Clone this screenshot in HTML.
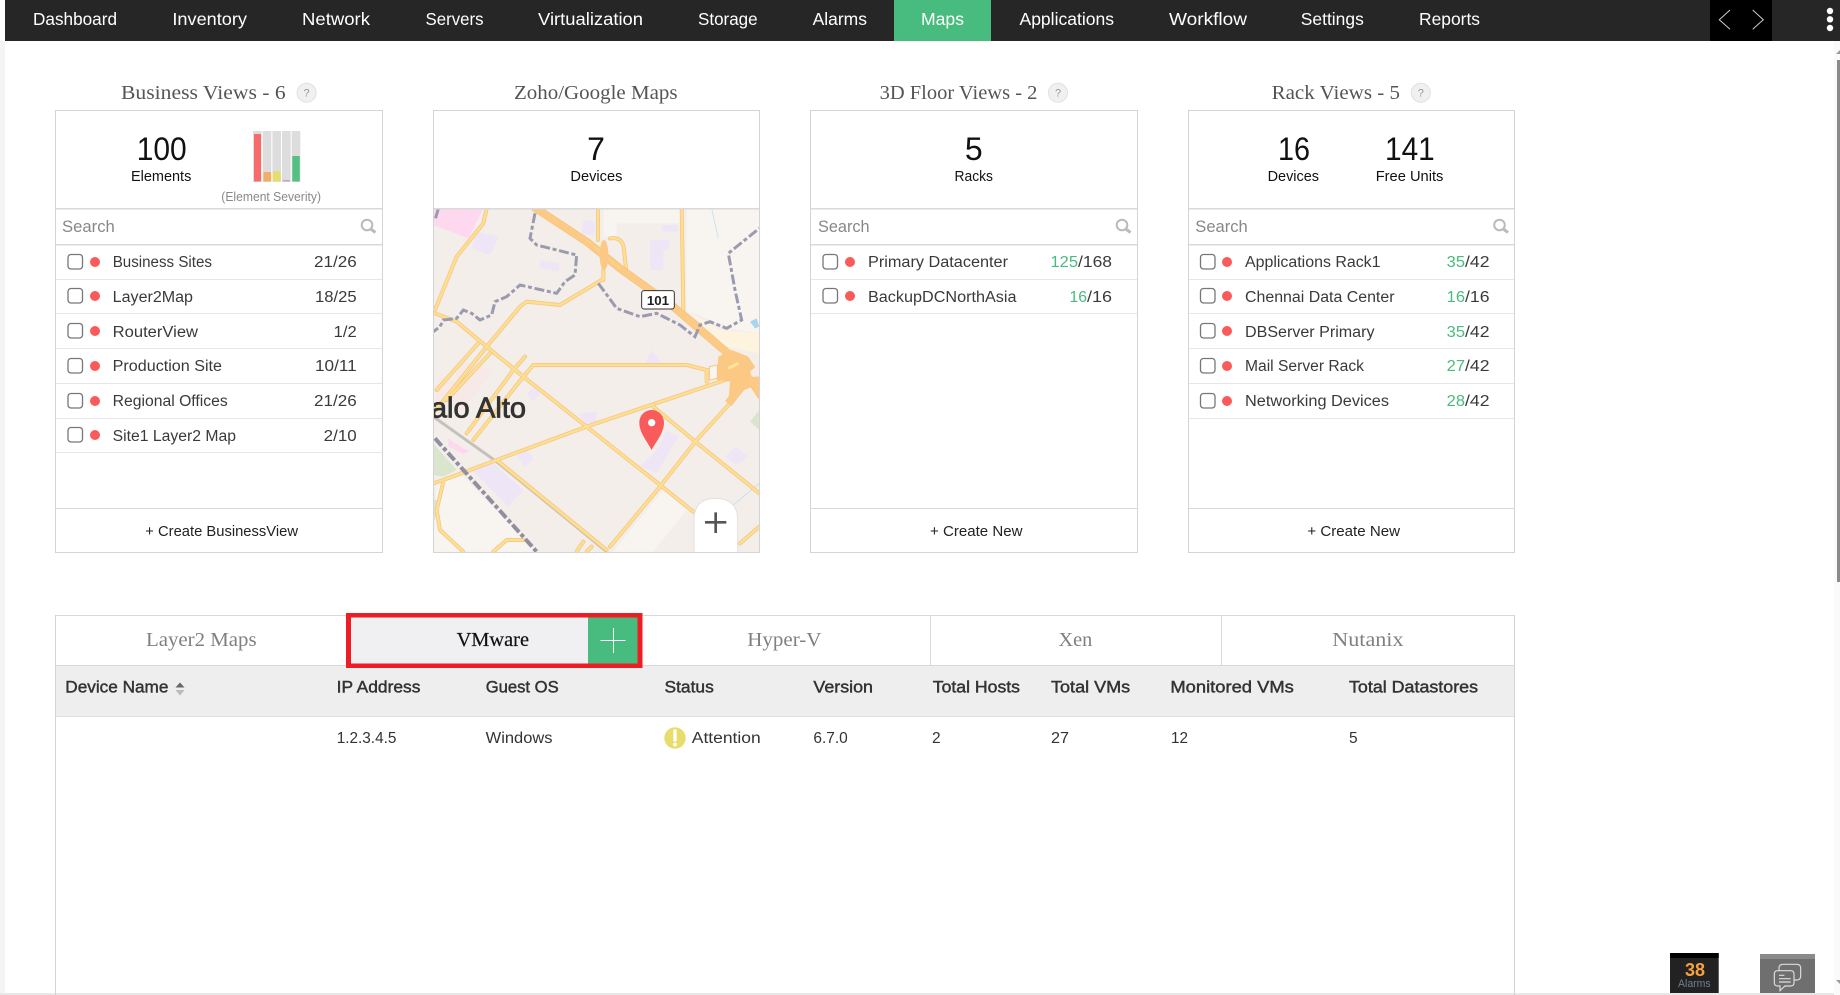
<!DOCTYPE html>
<html><head><meta charset="utf-8"><title>Maps</title>
<style>
html,body{margin:0;padding:0;background:#fff;width:1840px;height:995px;overflow:hidden}
svg{display:block}
text{font-family:"Liberation Sans",sans-serif;fill:#333}
.n{font-size:17.5px;fill:#fff}
.t{font-family:"Liberation Serif",serif;font-size:20px;fill:#555}
.tab{font-family:"Liberation Serif",serif;font-size:20px;fill:#808080}
.b{font-size:32px;fill:#111}
.l{font-size:15px;fill:#111}
.s{font-size:16.5px;fill:#888}
.r{font-size:15.5px;fill:#3a3a3a}
.g{font-size:15.5px;fill:#48bb7e}
.c{font-size:14.5px;fill:#222}
.h{font-size:17px;fill:#333;stroke:#333;stroke-width:.45px}
.d{font-size:15.5px;fill:#333}
.q{font-size:11px;fill:#999;text-anchor:middle}
.p{fill:none;stroke:#d4d4d4;stroke-width:1}
.sep{fill:#d9d9d9}
.row{fill:#e6e6e6}
.cb{fill:#fff;stroke:#777;stroke-width:1.3}
.dot{fill:#fa5a5a}
.mag{fill:none;stroke:#bbb;stroke-width:2}
</style></head>
<body>
<svg xmlns="http://www.w3.org/2000/svg" width="1840" height="995" viewBox="0 0 1840 995">
<defs>
<clipPath id="mc"><rect x="40" y="26" width="978" height="1030"/></clipPath>
<path id="rd" fill="none" stroke-linejoin="round" stroke-linecap="round" d="M534 20V120M785 20L790 335M570 115Q610 110 612 150L618 205M200 26L190 70L110 170L45 330M545 240L520 255L420 315L320 305L300 320L200 440L40 640M45 340L110 365L200 440L310 530L500 680L720 855L820 935M700 620L820 720L1018 880M930 610L830 720L720 860L570 1040M340 495H800L860 510H900M860 510V545M340 495L310 530L160 720M315 470L280 510L140 700M210 460L80 600M175 430L50 570M945 530L500 680L230 780L70 840L40 850M230 780L560 1050M70 845L50 930L60 990L130 1055M220 1055L260 1020H310M470 1055L490 1025M500 1055L515 1040M1018 980L960 1030M550 240V210"/>
<path id="hw" fill="none" stroke-linejoin="round" d="M340 20L500 125L600 205L760 320L900 440L960 490L1025 590M925 610L965 560L1025 535"/>
</defs>

<rect x="0" y="41" width="5" height="954" fill="#f4f4f4"/>
<rect x="5" y="0" width="1835" height="41" fill="#262626"/>
<rect x="894" y="0" width="97" height="41" fill="#48bb7e"/>
<rect x="1710" y="0" width="62" height="41" fill="#000"/>
<text class="n" x="33" y="25" textLength="84" lengthAdjust="spacingAndGlyphs">Dashboard</text>
<text class="n" x="172.4" y="25" textLength="74.6" lengthAdjust="spacingAndGlyphs">Inventory</text>
<text class="n" x="302" y="25" textLength="68" lengthAdjust="spacingAndGlyphs">Network</text>
<text class="n" x="425.5" y="25" textLength="58" lengthAdjust="spacingAndGlyphs">Servers</text>
<text class="n" x="538" y="25" textLength="105" lengthAdjust="spacingAndGlyphs">Virtualization</text>
<text class="n" x="698" y="25" textLength="59.6" lengthAdjust="spacingAndGlyphs">Storage</text>
<text class="n" x="812.6" y="25" textLength="54.4" lengthAdjust="spacingAndGlyphs">Alarms</text>
<text class="n" x="921" y="25" textLength="43" lengthAdjust="spacingAndGlyphs">Maps</text>
<text class="n" x="1019.5" y="25" textLength="94.5" lengthAdjust="spacingAndGlyphs">Applications</text>
<text class="n" x="1169" y="25" textLength="78" lengthAdjust="spacingAndGlyphs">Workflow</text>
<text class="n" x="1300.8" y="25" textLength="63" lengthAdjust="spacingAndGlyphs">Settings</text>
<text class="n" x="1419" y="25" textLength="61" lengthAdjust="spacingAndGlyphs">Reports</text>
<path d="M1730 10L1719.3 19.7L1730 29.3M1752.7 10L1763.3 19.7L1752.7 29.3" fill="none" stroke="#ccc" stroke-width="1"/>
<circle cx="1830" cy="11" r="3.2" fill="#fff"/><circle cx="1830" cy="19.3" r="3.2" fill="#fff"/><circle cx="1830" cy="28" r="3.2" fill="#fff"/>

<!-- scrollbar -->
<rect x="1834" y="41" width="6" height="954" fill="#fafafa"/>
<rect x="1837" y="60" width="3" height="522" fill="#8a8a8a"/>
<path d="M1836 54L1840 50V54Z" fill="#999"/>
<path d="M1836 980H1840V984Z" fill="#999"/>
<rect x="0" y="993" width="1834" height="2" fill="#e8e8e8"/>

<!-- titles -->
<text class="t" x="121" y="99" textLength="164.7" lengthAdjust="spacingAndGlyphs">Business Views - 6</text>
<text class="t" x="514" y="99" textLength="163.5" lengthAdjust="spacingAndGlyphs">Zoho/Google Maps</text>
<text class="t" x="879.6" y="99" textLength="157.8" lengthAdjust="spacingAndGlyphs">3D Floor Views - 2</text>
<text class="t" x="1271.6" y="99" textLength="128.4" lengthAdjust="spacingAndGlyphs">Rack Views - 5</text>
<g fill="#f0f0f0" stroke="#e0e0e0">
<circle cx="306.6" cy="92.7" r="9.5"/><circle cx="1058" cy="92.7" r="9.5"/><circle cx="1420.8" cy="92.7" r="9.5"/>
</g>
<text class="q" x="306.6" y="96.5">?</text><text class="q" x="1058" y="96.5">?</text><text class="q" x="1420.8" y="96.5">?</text>

<!-- MAP -->
<rect x="433" y="208" width="327" height="344" fill="#f3eeea"/>
<g transform="translate(420 200) scale(.33333)" clip-path="url(#mc)">
<path d="M800 26H1018V400L930 385L800 330ZM50 840L130 830L350 1055H40ZM730 870L800 930L700 1055H580ZM550 26H780V70H590V110H550Z" fill="#f8f5f1"/>
<path d="M800 330L900 390L1018 400V460L920 440Z" fill="#fdf3de"/>
<path d="M40 26H190L145 115L40 75Z" fill="#fed8ee"/>
<path d="M85 715L130 745L150 752L130 762L85 740Z" fill="#fed8ee"/>
<path d="M40 730L110 810L70 830L40 825ZM1018 630L990 665L1018 690ZM40 900L55 900L45 960L40 960Z" fill="#d9e6cd"/>
<g fill="#eee6f6">
<path d="M170 95L235 110L210 165L155 145Z"/><path d="M360 180L420 190L415 215L360 205Z"/>
<path d="M690 120H750L745 150H730V210H690Z"/><path d="M725 75H775V95H725Z"/>
<path d="M490 60L525 65V105H485Z"/><path d="M675 490L695 450L725 490Z"/>
<path d="M320 580L345 560L360 580L340 605Z"/><path d="M475 640L530 635V670L500 675Z"/>
<path d="M660 800L710 750L740 690L775 710L710 820Z"/><path d="M290 770L320 750L340 775L315 800Z"/>
<path d="M155 810L220 790L310 870L265 920Z"/><path d="M915 770L945 740L985 770L950 795Z"/>
</g>
<path d="M60 520L110 550L60 640L45 600ZM120 480L220 510L120 640L90 600Z" fill="#f6e9e6"/>
<path d="M990 365L1010 355L1018 380L1005 385Z" fill="#a8d4f0"/>
<path d="M875 26L895 115M940 915L1018 850M845 375L800 340" fill="none" stroke="#b8d8f0" stroke-width="2"/>
<path d="M40 650L230 785L560 1055" fill="none" stroke="#c4c0bc" stroke-width="9"/>
<use href="#rd" stroke="#f6c688" stroke-width="12"/>
<use href="#rd" stroke="#fde08f" stroke-width="7"/>
<use href="#hw" stroke="#f5c27e" stroke-width="24"/>
<use href="#hw" stroke="#fcca84" stroke-width="20"/>
<path d="M895 470L935 450L985 470L1005 500L990 540L965 570L925 610L930 545L890 540Z" fill="#fbc983"/>
<path d="M868 500L892 495V535L868 540Z" fill="#f8f5f1" stroke="#f6c688" stroke-width="3"/>
<path d="M925 505L955 490" stroke="#fde59a" stroke-width="9" fill="none"/>
<path d="M990 515Q1010 495 1018 500V530L995 530Z" fill="#f6ece6"/>
<path d="M500 120L600 205" stroke="#fcd486" stroke-width="4" fill="none"/>
<ellipse cx="552" cy="165" rx="13" ry="45" fill="#fbc984"/>
<path d="M345 40L330 115L350 135L470 165L465 225L435 245L410 280L300 255L260 290L225 305L215 345L180 360L155 340L130 330L110 355L70 360L60 380L40 395M535 250L590 325L660 350L710 340L780 375L825 410L840 375L870 365L920 385L965 360L945 270L925 160L1018 85M55 26L45 60" fill="none" stroke="#9b9bb0" stroke-width="9" stroke-dasharray="30 8 12 8"/>
<path d="M45 715L130 810L350 1055" fill="none" stroke="#8f8f9f" stroke-width="12" stroke-dasharray="30 8 12 8"/>
<text x="318" y="652" text-anchor="end" style="font-size:87px;fill:#333;stroke:#333;stroke-width:2.5px;font-family:'Liberation Sans',sans-serif">Palo Alto</text>
<rect x="665" y="272" width="98" height="55" rx="7" fill="#fff" stroke="#333" stroke-width="3"/>
<text x="714" y="315" text-anchor="middle" style="font-size:40px;font-weight:bold;fill:#222">101</text>
<path d="M695 750C680 722 658 698 658 668C658 646 675 630 695 630C715 630 732 646 732 668C732 698 710 722 695 750Z" fill="#f95b5b"/>
<circle cx="695" cy="668" r="11" fill="#fff"/>
<path d="M822 1060V960Q822 895 887 895Q953 895 953 960V1060Z" fill="#fff" stroke="#e4e0dc" stroke-width="3"/>
<path d="M855 967H919M887 937V999" stroke="#555" stroke-width="8" fill="none"/>
</g>

<!-- panels -->
<rect class="p" x="55.5" y="110.5" width="327" height="442"/>
<rect class="p" x="433.5" y="110.5" width="326" height="442"/>
<rect class="p" x="810.5" y="110.5" width="327" height="442"/>
<rect class="p" x="1188.5" y="110.5" width="326" height="442"/>
<g class="sep">
<rect x="56" y="208" width="326" height="1.5"/><rect x="434" y="208" width="325" height="1.5"/><rect x="811" y="208" width="326" height="1.5"/><rect x="1189" y="208" width="325" height="1.5"/>
<rect x="56" y="244" width="326" height="1.5"/><rect x="811" y="244" width="326" height="1.5"/><rect x="1189" y="244" width="325" height="1.5"/>
<rect x="56" y="508" width="326" height="1"/><rect x="811" y="508" width="326" height="1"/><rect x="1189" y="508" width="325" height="1"/>
</g>
<g class="row">
<rect x="56" y="279" width="326" height="1"/><rect x="56" y="313" width="326" height="1"/><rect x="56" y="348" width="326" height="1"/><rect x="56" y="383" width="326" height="1"/><rect x="56" y="418" width="326" height="1"/><rect x="56" y="452" width="326" height="1"/>
<rect x="811" y="279" width="326" height="1"/><rect x="811" y="313" width="326" height="1"/>
<rect x="1189" y="279" width="325" height="1"/><rect x="1189" y="313" width="325" height="1"/><rect x="1189" y="348" width="325" height="1"/><rect x="1189" y="383" width="325" height="1"/><rect x="1189" y="418" width="325" height="1"/>
</g>

<!-- panel 1 header -->
<text class="b" x="136.7" y="160" textLength="50" lengthAdjust="spacingAndGlyphs">100</text>
<text class="l" x="131" y="181" textLength="60.3" lengthAdjust="spacingAndGlyphs">Elements</text>
<g fill="#ddd"><rect x="253" y="131" width="8.6" height="51"/><rect x="262.7" y="131" width="8.6" height="51"/><rect x="272.4" y="131" width="8.6" height="51"/><rect x="282" y="131" width="8.6" height="51"/><rect x="291.7" y="131" width="8.6" height="51"/></g>
<rect x="254" y="134" width="7" height="47.5" fill="#f96a6a"/>
<rect x="263.5" y="172" width="7.5" height="9.5" fill="#f5ad63"/>
<rect x="273" y="171.3" width="7.5" height="10.2" fill="#e8dd6b"/>
<rect x="282.7" y="180" width="7.5" height="1.5" fill="#cda0d0"/>
<rect x="292.3" y="156" width="7.5" height="25.5" fill="#56c083"/>
<text x="221.3" y="201" textLength="99.7" lengthAdjust="spacingAndGlyphs" style="font-size:13px;fill:#888">(Element Severity)</text>

<text class="b" x="596" y="160" text-anchor="middle">7</text>
<text class="l" x="570.4" y="181" textLength="52" lengthAdjust="spacingAndGlyphs">Devices</text>
<text class="b" x="973.8" y="160" text-anchor="middle">5</text>
<text class="l" x="954.5" y="181" textLength="38.5" lengthAdjust="spacingAndGlyphs">Racks</text>
<text class="b" x="1278" y="160" textLength="32" lengthAdjust="spacingAndGlyphs">16</text>
<text class="l" x="1267.6" y="181" textLength="51.4" lengthAdjust="spacingAndGlyphs">Devices</text>
<text class="b" x="1385" y="160" textLength="49.7" lengthAdjust="spacingAndGlyphs">141</text>
<text class="l" x="1375.7" y="181" textLength="67.7" lengthAdjust="spacingAndGlyphs">Free Units</text>

<!-- search -->
<text class="s" x="62" y="232" textLength="52.8" lengthAdjust="spacingAndGlyphs">Search</text>
<text class="s" x="818" y="232" textLength="51.6" lengthAdjust="spacingAndGlyphs">Search</text>
<text class="s" x="1195.3" y="232" textLength="52.4" lengthAdjust="spacingAndGlyphs">Search</text>
<g class="mag">
<circle cx="367" cy="225" r="5.3"/><path d="M370.8 229L375.5 232.5" stroke-width="3"/>
<circle cx="1122" cy="225" r="5.3"/><path d="M1125.8 229L1130.5 232.5" stroke-width="3"/>
<circle cx="1499.5" cy="225" r="5.3"/><path d="M1503.3 229L1508 232.5" stroke-width="3"/>
</g>

<!-- panel 1 rows -->
<g>
<rect class="cb" x="68" y="254.5" width="14.5" height="14.5" rx="3"/><circle class="dot" cx="95" cy="262" r="5"/>
<rect class="cb" x="68" y="288.5" width="14.5" height="14.5" rx="3"/><circle class="dot" cx="95" cy="296" r="5"/>
<rect class="cb" x="68" y="323.5" width="14.5" height="14.5" rx="3"/><circle class="dot" cx="95" cy="331" r="5"/>
<rect class="cb" x="68" y="358.5" width="14.5" height="14.5" rx="3"/><circle class="dot" cx="95" cy="366" r="5"/>
<rect class="cb" x="68" y="393.5" width="14.5" height="14.5" rx="3"/><circle class="dot" cx="95" cy="401" r="5"/>
<rect class="cb" x="68" y="427.5" width="14.5" height="14.5" rx="3"/><circle class="dot" cx="95" cy="435" r="5"/>
</g>
<text class="r" x="112.7" y="267" textLength="99.3" lengthAdjust="spacingAndGlyphs">Business Sites</text>
<text class="r" x="112.7" y="302" textLength="80.3" lengthAdjust="spacingAndGlyphs">Layer2Map</text>
<text class="r" x="112.7" y="337" textLength="85.3" lengthAdjust="spacingAndGlyphs">RouterView</text>
<text class="r" x="112.7" y="371" textLength="109.3" lengthAdjust="spacingAndGlyphs">Production Site</text>
<text class="r" x="112.7" y="406" textLength="115" lengthAdjust="spacingAndGlyphs">Regional Offices</text>
<text class="r" x="112.7" y="441" textLength="123.3" lengthAdjust="spacingAndGlyphs">Site1 Layer2 Map</text>
<text class="r" x="314" y="267" textLength="42.7" lengthAdjust="spacingAndGlyphs">21/26</text>
<text class="r" x="315" y="302" textLength="41.7" lengthAdjust="spacingAndGlyphs">18/25</text>
<text class="r" x="333.7" y="337" textLength="23" lengthAdjust="spacingAndGlyphs">1/2</text>
<text class="r" x="315" y="371" textLength="41.7" lengthAdjust="spacingAndGlyphs">10/11</text>
<text class="r" x="314" y="406" textLength="42.7" lengthAdjust="spacingAndGlyphs">21/26</text>
<text class="r" x="323.7" y="441" textLength="33" lengthAdjust="spacingAndGlyphs">2/10</text>
<text class="c" x="145.3" y="536" textLength="152.7" lengthAdjust="spacingAndGlyphs">+ Create BusinessView</text>

<!-- panel 3 rows -->
<rect class="cb" x="823" y="254.5" width="14.5" height="14.5" rx="3"/><circle class="dot" cx="850" cy="262" r="5"/>
<rect class="cb" x="823" y="288.5" width="14.5" height="14.5" rx="3"/><circle class="dot" cx="850" cy="296" r="5"/>
<text class="r" x="868" y="267" textLength="140" lengthAdjust="spacingAndGlyphs">Primary Datacenter</text>
<text class="r" x="868" y="302" textLength="148.5" lengthAdjust="spacingAndGlyphs">BackupDCNorthAsia</text>
<text class="g" x="1050.5" y="267" textLength="27.5" lengthAdjust="spacingAndGlyphs">125</text><text class="r" x="1078" y="267" textLength="34" lengthAdjust="spacingAndGlyphs">/168</text>
<text class="g" x="1069.5" y="302" textLength="17.5" lengthAdjust="spacingAndGlyphs">16</text><text class="r" x="1087" y="302" textLength="25" lengthAdjust="spacingAndGlyphs">/16</text>
<text class="c" x="930" y="536" textLength="92.5" lengthAdjust="spacingAndGlyphs">+ Create New</text>

<!-- panel 4 rows -->
<rect class="cb" x="1200.5" y="254.5" width="14.5" height="14.5" rx="3"/><circle class="dot" cx="1227" cy="262" r="5"/>
<rect class="cb" x="1200.5" y="288.5" width="14.5" height="14.5" rx="3"/><circle class="dot" cx="1227" cy="296" r="5"/>
<rect class="cb" x="1200.5" y="323.5" width="14.5" height="14.5" rx="3"/><circle class="dot" cx="1227" cy="331" r="5"/>
<rect class="cb" x="1200.5" y="358.5" width="14.5" height="14.5" rx="3"/><circle class="dot" cx="1227" cy="366" r="5"/>
<rect class="cb" x="1200.5" y="393.5" width="14.5" height="14.5" rx="3"/><circle class="dot" cx="1227" cy="401" r="5"/>
<text class="r" x="1245" y="267" textLength="135.5" lengthAdjust="spacingAndGlyphs">Applications Rack1</text>
<text class="r" x="1245" y="302" textLength="149.5" lengthAdjust="spacingAndGlyphs">Chennai Data Center</text>
<text class="r" x="1245" y="337" textLength="129.5" lengthAdjust="spacingAndGlyphs">DBServer Primary</text>
<text class="r" x="1245" y="371" textLength="119" lengthAdjust="spacingAndGlyphs">Mail Server Rack</text>
<text class="r" x="1245" y="406" textLength="144" lengthAdjust="spacingAndGlyphs">Networking Devices</text>
<text class="g" x="1446.7" y="267" textLength="18.3" lengthAdjust="spacingAndGlyphs">35</text><text class="r" x="1465" y="267" textLength="24.5" lengthAdjust="spacingAndGlyphs">/42</text>
<text class="g" x="1446.7" y="302" textLength="18.3" lengthAdjust="spacingAndGlyphs">16</text><text class="r" x="1465" y="302" textLength="24.5" lengthAdjust="spacingAndGlyphs">/16</text>
<text class="g" x="1446.7" y="337" textLength="18.3" lengthAdjust="spacingAndGlyphs">35</text><text class="r" x="1465" y="337" textLength="24.5" lengthAdjust="spacingAndGlyphs">/42</text>
<text class="g" x="1446.7" y="371" textLength="18.3" lengthAdjust="spacingAndGlyphs">27</text><text class="r" x="1465" y="371" textLength="24.5" lengthAdjust="spacingAndGlyphs">/42</text>
<text class="g" x="1446.7" y="406" textLength="18.3" lengthAdjust="spacingAndGlyphs">28</text><text class="r" x="1465" y="406" textLength="24.5" lengthAdjust="spacingAndGlyphs">/42</text>
<text class="c" x="1307.4" y="536" textLength="92.6" lengthAdjust="spacingAndGlyphs">+ Create New</text>

<!-- tabs + table -->
<rect x="55" y="615" width="1460" height="1" fill="#d9d9d9"/>
<rect x="55" y="615" width="1" height="380" fill="#d4d4d4"/>
<rect x="1514" y="615" width="1" height="380" fill="#d4d4d4"/>
<rect x="56" y="665" width="1458" height="52" fill="#eeeeee"/>
<rect x="56" y="665" width="1458" height="1" fill="#d9d9d9"/>
<rect x="56" y="716" width="1458" height="1" fill="#dddddd"/>
<rect x="930" y="616" width="1" height="49" fill="#d9d9d9"/>
<rect x="1221" y="616" width="1" height="49" fill="#d9d9d9"/>
<rect x="346" y="613" width="296.5" height="55" fill="#ee1c25"/>
<rect x="351" y="617.5" width="237" height="46" fill="#f0f0f2"/>
<rect x="588" y="617.5" width="49.5" height="46" fill="#48bb7e"/>
<path d="M600.5 640.5H625.5M613.5 628V653" stroke="#fff" stroke-width="1"/>
<text class="tab" x="146" y="646" textLength="110.6" lengthAdjust="spacingAndGlyphs">Layer2 Maps</text>
<text class="tab" x="456.6" y="646" textLength="72.4" lengthAdjust="spacingAndGlyphs" style="fill:#111;stroke:#111;stroke-width:.2px">VMware</text>
<text class="tab" x="747.3" y="646" textLength="74.1" lengthAdjust="spacingAndGlyphs">Hyper-V</text>
<text class="tab" x="1058.5" y="646" textLength="33.8" lengthAdjust="spacingAndGlyphs">Xen</text>
<text class="tab" x="1332.3" y="646" textLength="71.2" lengthAdjust="spacingAndGlyphs">Nutanix</text>

<text class="h" x="65.3" y="692.5" textLength="103.1" lengthAdjust="spacingAndGlyphs">Device Name</text>
<path d="M175.5 687.5L180 682.5L184.5 687.5Z" fill="#666"/><path d="M175.5 690L180 695.5L184.5 690Z" fill="#bbb"/>
<text class="h" x="336.7" y="692.5" textLength="83.7" lengthAdjust="spacingAndGlyphs">IP Address</text>
<text class="h" x="485.7" y="692.5" textLength="73" lengthAdjust="spacingAndGlyphs">Guest OS</text>
<text class="h" x="664.5" y="692.5" textLength="49.3" lengthAdjust="spacingAndGlyphs">Status</text>
<text class="h" x="813.4" y="692.5" textLength="59.6" lengthAdjust="spacingAndGlyphs">Version</text>
<text class="h" x="932.8" y="692.5" textLength="87.2" lengthAdjust="spacingAndGlyphs">Total Hosts</text>
<text class="h" x="1051" y="692.5" textLength="79.2" lengthAdjust="spacingAndGlyphs">Total VMs</text>
<text class="h" x="1170.4" y="692.5" textLength="123.4" lengthAdjust="spacingAndGlyphs">Monitored VMs</text>
<text class="h" x="1349" y="692.5" textLength="129" lengthAdjust="spacingAndGlyphs">Total Datastores</text>

<text class="d" x="336.7" y="743" textLength="59.7" lengthAdjust="spacingAndGlyphs">1.2.3.4.5</text>
<text class="d" x="485.7" y="743" textLength="66.8" lengthAdjust="spacingAndGlyphs">Windows</text>
<circle cx="675" cy="738" r="10.7" fill="#e8dd6b"/>
<path d="M675 731V740" stroke="#fff" stroke-width="3.4" stroke-linecap="round"/><circle cx="675" cy="744.5" r="1.9" fill="#fff"/>
<text class="d" x="691.8" y="743" textLength="68.9" lengthAdjust="spacingAndGlyphs">Attention</text>
<text class="d" x="813.4" y="743" textLength="34.4" lengthAdjust="spacingAndGlyphs">6.7.0</text>
<text class="d" x="932" y="743">2</text>
<text class="d" x="1051" y="743" textLength="18" lengthAdjust="spacingAndGlyphs">27</text>
<text class="d" x="1171" y="743" textLength="17" lengthAdjust="spacingAndGlyphs">12</text>
<text class="d" x="1349" y="743">5</text>

<!-- bottom widgets -->
<rect x="1670" y="953" width="48.7" height="40" fill="#222"/>
<rect x="1670" y="953" width="48.7" height="5" fill="#000"/>
<text x="1695" y="976" text-anchor="middle" style="font-size:18px;font-weight:bold;fill:#f7a13e">38</text>
<text x="1678" y="987" textLength="32.7" lengthAdjust="spacingAndGlyphs" style="font-size:11px;fill:#6d7f8f">Alarms</text>
<rect x="1760" y="954" width="55" height="39" fill="#6f6f6f"/>
<rect x="1760" y="954" width="55" height="5" fill="#8a8a8a"/>
<g transform="translate(1600 900) scale(.33333)" fill="none" stroke="#ddd" stroke-width="3.5">
<path d="M537 212V205Q537 193 549 193H590Q602 193 602 205V228Q602 240 590 240H582"/>
<path d="M533 212H572Q582 212 582 222V248Q582 258 572 258H555L540 272V258H533Q523 258 523 248V222Q523 212 533 212Z"/>
<path d="M537 226H553M537 236H572M537 246H572"/>
</g>
</svg>
</body></html>
